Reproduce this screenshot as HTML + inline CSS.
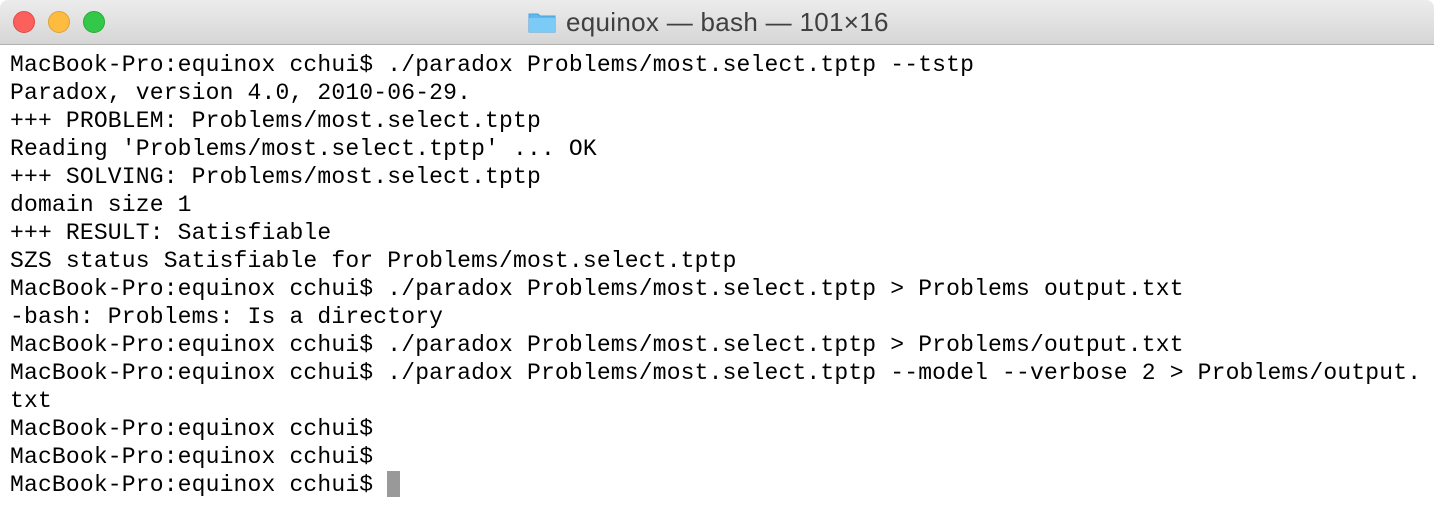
<!DOCTYPE html>
<html><head><meta charset="utf-8"><style>
html,body{margin:0;padding:0;}
body{width:1434px;height:508px;overflow:hidden;background:#fff;position:relative;font-family:"Liberation Sans",sans-serif;}
.tb{position:absolute;left:0;top:0;width:1434px;height:44px;background:linear-gradient(#ececec,#d6d6d6);border-bottom:1px solid #b0b0b0;border-radius:8px 8px 0 0;}
.l{position:absolute;top:11px;width:22px;height:22px;border-radius:50%;box-sizing:border-box;}
.title{position:absolute;top:7px;left:566px;font-size:26px;color:#404040;white-space:nowrap;letter-spacing:0.3px;}
.folder{position:absolute;left:528px;top:12px;width:28px;height:21px;}
pre{position:absolute;left:10px;top:51px;margin:0;font-family:"Liberation Mono",monospace;font-size:23px;letter-spacing:0.17px;line-height:28px;color:#000;}
.cur{display:inline-block;width:13px;height:26px;background:#999;vertical-align:-6px;}
</style></head><body>
<div class="tb">
<div class="l" style="left:13px;background:#fc605c;border:1px solid #de4a46"></div>
<div class="l" style="left:48px;background:#fdbc40;border:1px solid #dea236"></div>
<div class="l" style="left:83px;background:#34c84a;border:1px solid #27aa35"></div>
<svg class="folder" viewBox="0 0 28 21"><path d="M1 2 h9 l2 2 h15 v16 h-26z" fill="#5fb9f0" stroke="#4aa3dc"/><rect x="1" y="6" width="26" height="14" fill="#7ccbf7"/></svg>
<div class="title">equinox — bash — 101×16</div>
</div>
<pre>MacBook-Pro:equinox cchui$ ./paradox Problems/most.select.tptp --tstp
Paradox, version 4.0, 2010-06-29.
+++ PROBLEM: Problems/most.select.tptp
Reading 'Problems/most.select.tptp' ... OK
+++ SOLVING: Problems/most.select.tptp
domain size 1
+++ RESULT: Satisfiable
SZS status Satisfiable for Problems/most.select.tptp
MacBook-Pro:equinox cchui$ ./paradox Problems/most.select.tptp &gt; Problems output.txt
-bash: Problems: Is a directory
MacBook-Pro:equinox cchui$ ./paradox Problems/most.select.tptp &gt; Problems/output.txt
MacBook-Pro:equinox cchui$ ./paradox Problems/most.select.tptp --model --verbose 2 &gt; Problems/output.
txt
MacBook-Pro:equinox cchui$
MacBook-Pro:equinox cchui$
MacBook-Pro:equinox cchui$ <span class="cur"></span></pre>
</body></html>
